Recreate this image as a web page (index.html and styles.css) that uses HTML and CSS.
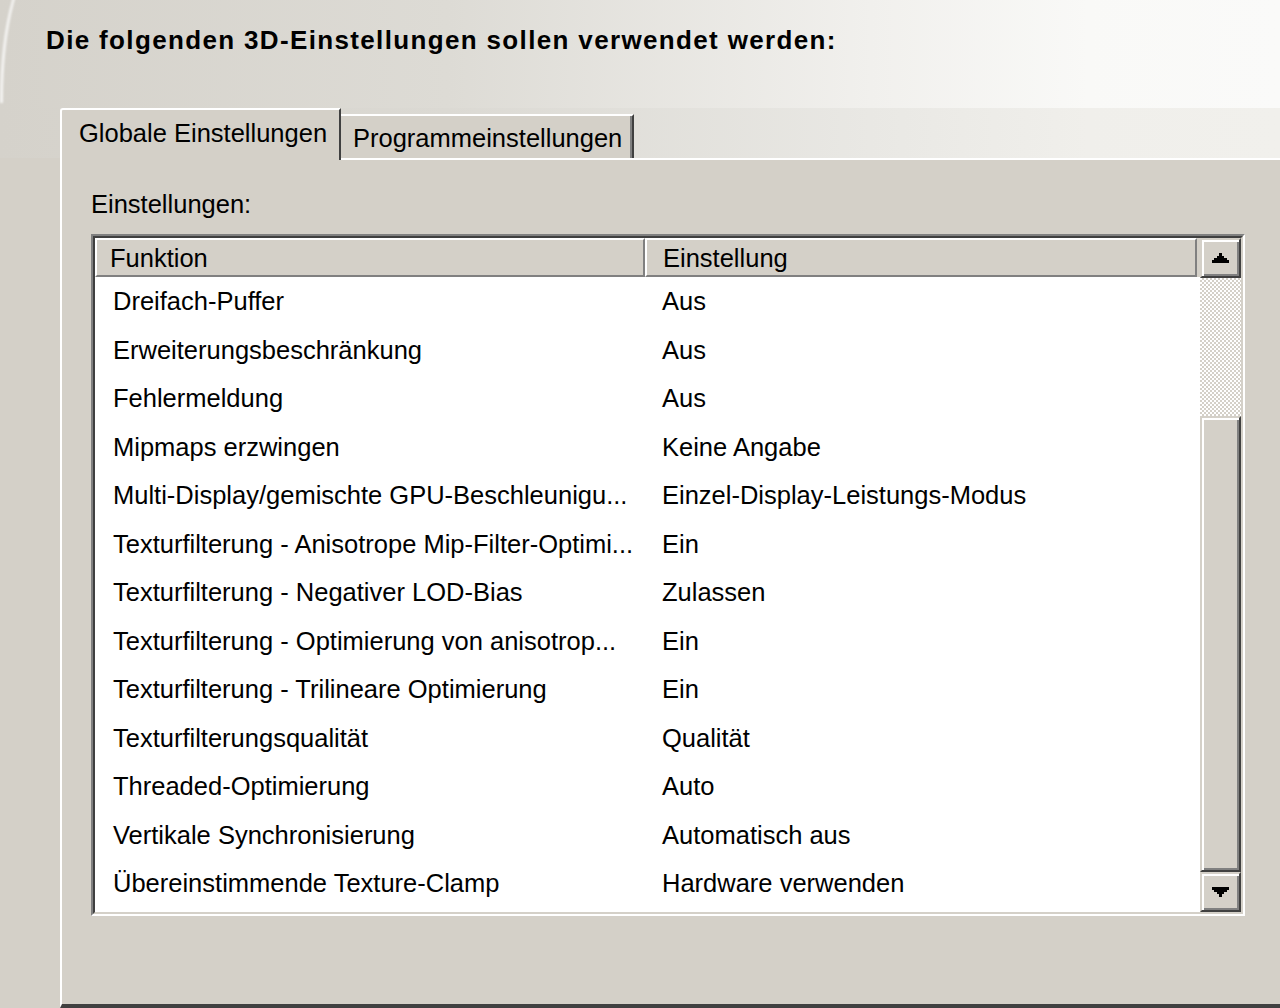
FILE: index.html
```html
<!DOCTYPE html>
<html lang="de">
<head>
  <meta charset="UTF-8">
  <title>3D-Einstellungen verwalten</title>
  <link rel="stylesheet" href="styles.css">
</head>
<body>
  <div class="dialog">
    <div class="caption">
      <h1>Die folgenden 3D-Einstellungen sollen verwendet werden:</h1>
    </div>

    <div class="tab-strip">
      <div class="tab tab-active">Globale Einstellungen</div>
      <div class="tab">Programmeinstellungen</div>
    </div>

    <div class="tab-panel">
      <div class="field-label">Einstellungen:</div>

      <!-- Settings list with header and vertical scrollbar -->
      <div class="listview">
        <div class="lv-inner">
          <div class="lv-main">
            <div class="lv-header">
              <div class="lv-col col-func">Funktion</div>
              <div class="lv-col col-value">Einstellung</div>
            </div>
            <div class="lv-rows">
              <div class="lv-row"><span class="cell-func">Dreifach-Puffer</span><span class="cell-value">Aus</span></div>
              <div class="lv-row"><span class="cell-func">Erweiterungsbeschränkung</span><span class="cell-value">Aus</span></div>
              <div class="lv-row"><span class="cell-func">Fehlermeldung</span><span class="cell-value">Aus</span></div>
              <div class="lv-row"><span class="cell-func">Mipmaps erzwingen</span><span class="cell-value">Keine Angabe</span></div>
              <div class="lv-row"><span class="cell-func">Multi-Display/gemischte GPU-Beschleunigu...</span><span class="cell-value">Einzel-Display-Leistungs-Modus</span></div>
              <div class="lv-row"><span class="cell-func">Texturfilterung - Anisotrope Mip-Filter-Optimi...</span><span class="cell-value">Ein</span></div>
              <div class="lv-row"><span class="cell-func">Texturfilterung - Negativer LOD-Bias</span><span class="cell-value">Zulassen</span></div>
              <div class="lv-row"><span class="cell-func">Texturfilterung - Optimierung von anisotrop...</span><span class="cell-value">Ein</span></div>
              <div class="lv-row"><span class="cell-func">Texturfilterung - Trilineare Optimierung</span><span class="cell-value">Ein</span></div>
              <div class="lv-row"><span class="cell-func">Texturfilterungsqualität</span><span class="cell-value">Qualität</span></div>
              <div class="lv-row"><span class="cell-func">Threaded-Optimierung</span><span class="cell-value">Auto</span></div>
              <div class="lv-row"><span class="cell-func">Vertikale Synchronisierung</span><span class="cell-value">Automatisch aus</span></div>
              <div class="lv-row"><span class="cell-func">Übereinstimmende Texture-Clamp</span><span class="cell-value">Hardware verwenden</span></div>
            </div>
          </div>

          <div class="scrollbar">
            <div class="sb-btn">
              <svg width="17" height="10" viewBox="0 0 7 4" shape-rendering="crispEdges"><path d="M3 0h1v1h1v1h1v1h1v1H0V3h1V2h1V1h1z"/></svg>
            </div>
            <div class="sb-track"></div>
            <div class="sb-thumb"></div>
            <div class="sb-btn">
              <svg width="17" height="10" viewBox="0 0 7 4" shape-rendering="crispEdges"><path d="M0 0h7v1h-1v1h-1v1h-1v1h-1v-1h-1v-1h-1v-1h-1z"/></svg>
            </div>
          </div>
        </div>
      </div>
    </div>
  </div>
</body>
</html>
```

FILE: styles.css
```css
body {
  margin: 0;
  background-color: #d4d0c8;
  font-family: "Liberation Sans", Arial, sans-serif;
  font-size: 25.5px;
  color: #000;
  overflow: hidden;
}
.dialog {
  position: relative;
  height: 1008px;
  overflow: hidden;
}
/* soft rounded frame edge in the top left corner */
.dialog::before {
  content: "";
  position: absolute;
  left: 0;
  top: -40px;
  width: 400px;
  height: 140px;
  border-top-left-radius: 40px 140px;
  border-left: 3px solid rgba(255,255,255,0.75);
  border-top: 3px solid rgba(255,255,255,0.75);
  filter: blur(1px);
  pointer-events: none;
}

/* Heading band */
.caption {
  height: 108px;
  box-sizing: border-box;
  padding: 25px 0 0 46px;
  background: linear-gradient(to right, #d5d2cb 0%, #dddbd5 35%, #f1f0ed 68%, #f9f9f7 85%, #fafaf9 100%);
}
.caption h1 {
  margin: 0;
  font-size: 26px;
  font-weight: bold;
  line-height: 30px;
  letter-spacing: 1.35px;
}

/* Tabs */
.tab-strip {
  display: flex;
  align-items: flex-end;
  height: 50px;
  padding-left: 60px;
  background: linear-gradient(to right, #d5d2cb 0%, #dbd9d3 35%, #e9e8e4 68%, #f0efeb 85%, #f1f0ec 100%);
}
.tab {
  box-sizing: border-box;
  background-color: #d4d0c8;
  white-space: nowrap;
}
.tab-active {
  position: relative;
  z-index: 1;
  width: 281px;
  height: 52px;
  margin-bottom: -2px;
  padding-left: 17px;
  line-height: 46px;
  border-top: 2px solid #fff;
  border-left: 2px solid #fff;
  border-right: 2px solid #404040;
  border-top-left-radius: 3px;
}
.tab:not(.tab-active) {
  width: 293px;
  height: 44px;
  padding: 2px 0 0 12px;
  line-height: 40px;
  border-top: 2px solid #fff;
  border-right: 2px solid #404040;
  box-shadow: inset -2px 0 #808080;
}

/* Panel under the tabs */
.tab-panel {
  height: 850px;
  box-sizing: border-box;
  margin-left: 60px;
  padding: 29px 0 0 29px;
  border-top: 2px solid #fff;
  border-left: 2px solid #fff;
  border-bottom: 4px solid #404040;
}
.field-label {
  line-height: 30px;
  margin-bottom: 15px;
}

/* Sunken list box */
.listview {
  width: 1154px;
  height: 682px;
  box-sizing: border-box;
  border: 2px solid;
  border-color: #808080 #fff #fff #808080;
}
.lv-inner {
  display: flex;
  height: 100%;
  box-sizing: border-box;
  border: 2px solid;
  border-color: #404040 #d4d0c8 #d4d0c8 #404040;
  background-color: #fff;
}
.lv-main {
  flex: 1;
  display: flex;
  flex-direction: column;
  overflow: hidden;
}
.lv-header {
  display: flex;
  flex: none;
  height: 39px;
  padding-right: 3px;
  background-color: #d4d0c8;
}
.lv-col {
  box-sizing: border-box;
  padding-top: 2px;
  line-height: 33px;
  border-top: 2px solid #fff;
  border-left: 2px solid #fff;
  border-right: 2px solid #808080;
  border-bottom: 2px solid #808080;
  white-space: nowrap;
}
.col-func {
  width: 550px;
  padding-left: 13px;
}
.col-value {
  flex: 1;
  padding-left: 16px;
}
.lv-row {
  display: flex;
  height: 48.5px;
  line-height: 48.5px;
  white-space: nowrap;
}
.cell-func {
  width: 550px;
  flex: none;
  box-sizing: border-box;
  padding-left: 18px;
  overflow: hidden;
}
.cell-value {
  padding-left: 17px;
}

/* Vertical scrollbar */
.scrollbar {
  flex: none;
  width: 41px;
  display: flex;
  flex-direction: column;
}
.sb-btn,
.sb-thumb {
  box-sizing: border-box;
  background-color: #d4d0c8;
  border: 2px solid;
  border-color: #d4d0c8 #404040 #404040 #d4d0c8;
  box-shadow: inset 2px 2px #fff, inset -2px -2px #808080;
}
.sb-btn {
  flex: none;
  height: 40px;
  display: flex;
  align-items: center;
  justify-content: center;
}
.sb-track {
  flex: none;
  height: 138px;
  background: repeating-conic-gradient(#d4d0c8 0 25%, #fff 0 50%) 0 0 / 4px 4px;
}
.sb-thumb {
  flex: 1;
}
```
